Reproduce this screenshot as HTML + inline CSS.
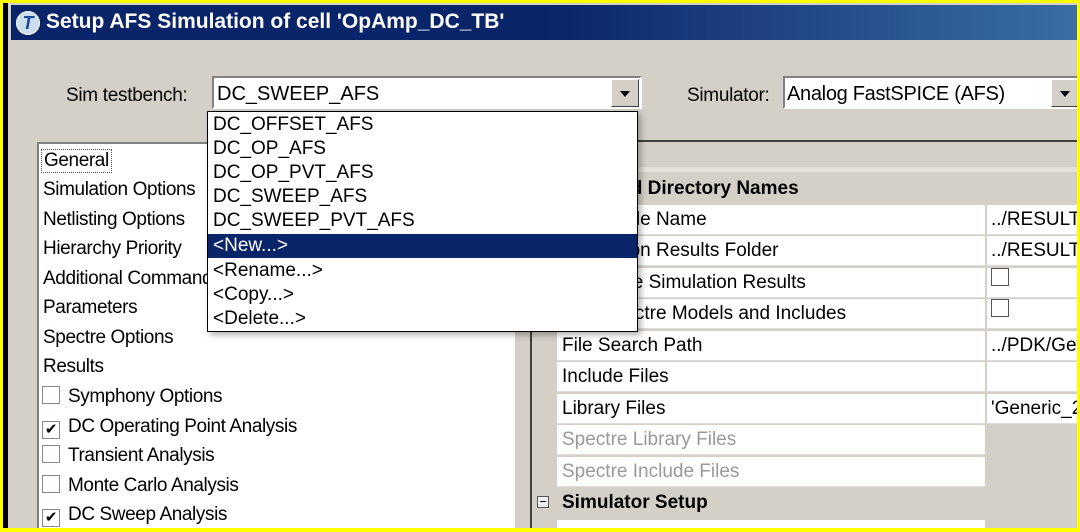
<html><head><style>
html,body{margin:0;width:1080px;height:532px;overflow:hidden}
body{background:#ff0;font-family:"Liberation Sans",sans-serif;position:relative}
.a{position:absolute}
#win{left:3px;top:3px;width:1074px;height:526px;background:#d4d0c8;border-left:5px solid #000;box-sizing:border-box;overflow:hidden}
#clip{position:absolute;left:0;top:0;width:1077px;height:529px;overflow:hidden}
.t{font-size:19px;color:#000;white-space:nowrap}
.li{position:absolute;left:4px;font-size:19px;letter-spacing:-0.4px}
.cb{display:inline-block;width:16px;height:16px;border:1px solid #888;background:#fff;vertical-align:-2px;margin-right:8px;position:relative;font-size:15px;line-height:16px;text-align:center}
.row{position:absolute;left:557px;width:428px;height:30px;background:#fff;font-size:19px;line-height:30px;padding-left:5px;box-sizing:border-box;border-bottom:1px solid #ddd}
.val{position:absolute;left:987px;width:90px;height:30px;background:#fff;font-size:19px;line-height:30px;padding-left:4px;box-sizing:border-box;overflow:hidden;white-space:nowrap;border-bottom:1px solid #ddd}
.dd{position:absolute;left:4px;font-size:19px;height:24px;line-height:24px;width:424px;padding-left:1px}
.btn{position:absolute;width:28px;height:28px;background:#d4d0c8;border:1px solid;border-color:#fff #404040 #404040 #fff;box-sizing:border-box}
.btn:after{content:"";position:absolute;left:8px;top:11px;border:5px solid transparent;border-top:6px solid #000}
</style></head><body>
<div id="clip">
<div id="win" class="a">
<div class="a" style="left:3px;top:2px;width:1066px;height:35px;background:linear-gradient(90deg,#0a246a,#0a246a 50%,#3a6ea5);"></div>
<div class="a" style="left:8px;top:8px;width:22px;height:22px;border-radius:50%;background:#cde;border:1px solid #fff;color:#1a4a9a;font-weight:bold;font-style:italic;font-size:18px;text-align:center;line-height:22px">T</div>
<div class="a t" style="left:38px;top:7px;color:#fff;font-weight:bold;font-size:21px">Setup AFS Simulation of cell 'OpAmp_DC_TB'</div>
<div class="a t" style="left:58px;top:82px;letter-spacing:-0.3px">Sim testbench:</div>
<div class="a" style="left:204px;top:73px;width:430px;height:33px;background:#fff;border:2px solid;border-color:#808080 #fff #fff #808080;box-sizing:border-box"></div>
<div class="a t" style="left:209px;top:80px;font-size:20px">DC_SWEEP_AFS</div>
<div class="btn" style="left:603px;top:76px"></div>
<div class="a t" style="left:679px;top:82px;letter-spacing:-0.3px">Simulator:</div>
<div class="a" style="left:775px;top:73px;width:300px;height:33px;background:#fff;border:2px solid;border-color:#808080 #fff #fff #808080;box-sizing:border-box"></div>
<div class="a t" style="left:779px;top:80px;font-size:20px;letter-spacing:-0.3px">Analog FastSPICE (AFS)</div>
<div class="btn" style="left:1043px;top:76px"></div>
<div class="a" style="left:29px;top:139px;width:478px;height:400px;background:#fff;border:2px solid;border-color:#808080 #fff #fff #808080;box-sizing:border-box">
<div class="li" style="top:5px;border:1px dotted #555;padding:0 2px;left:2px">General</div>
<div class="li" style="top:35px">Simulation Options</div>
<div class="li" style="top:65px">Netlisting Options</div>
<div class="li" style="top:94px">Hierarchy Priority</div>
<div class="li" style="top:124px">Additional Commands</div>
<div class="li" style="top:153px">Parameters</div>
<div class="li" style="top:183px">Spectre Options</div>
<div class="li" style="top:212px">Results</div>
<div class="li" style="top:242px;left:3px"><span class="cb"></span>Symphony Options</div>
<div class="li" style="top:272px;left:3px"><span class="cb">✔</span>DC Operating Point Analysis</div>
<div class="li" style="top:301px;left:3px"><span class="cb"></span>Transient Analysis</div>
<div class="li" style="top:331px;left:3px"><span class="cb"></span>Monte Carlo Analysis</div>
<div class="li" style="top:360px;left:3px"><span class="cb">✔</span>DC Sweep Analysis</div>
</div>
<div class="a" style="left:522px;top:137px;width:2px;height:400px;background:#404040"></div>
<div class="a" style="left:524px;top:137px;width:550px;height:2px;background:#404040"></div>
<div class="a" style="left:524px;top:164px;width:550px;height:5px;background:#e4e1da"></div>
</div>
<div class="a t" style="left:560px;top:146px;font-weight:bold">Setup</div>
<div class="a t" style="left:560px;top:178px;font-weight:bold">Files and Directory Names</div>
<div class="row" style="top:205px">Netlist File Name</div><div class="val" style="top:205px">../RESULTS</div>
<div class="row" style="top:236px">Simulation Results Folder</div><div class="val" style="top:236px">../RESULTS</div>
<div class="row" style="top:268px">Overwrite Simulation Results</div><div class="val" style="top:268px"><span class="cb" style="border-color:#555"></span></div>
<div class="row" style="top:299px">Use Spectre Models and Includes</div><div class="val" style="top:299px"><span class="cb" style="border-color:#555"></span></div>
<div class="row" style="top:331px">File Search Path</div><div class="val" style="top:331px">../PDK/Generic</div>
<div class="row" style="top:362px">Include Files</div><div class="val" style="top:362px"></div>
<div class="row" style="top:394px">Library Files</div><div class="val" style="top:394px">'Generic_2</div>
<div class="row" style="top:425px;color:#999">Spectre Library Files</div>
<div class="row" style="top:457px;color:#999">Spectre Include Files</div>
<div class="a" style="left:537px;top:496px;width:12px;height:12px;border:1px solid #555;background:#eee;box-sizing:border-box"><div class="a" style="left:2px;top:4px;width:6px;height:1px;background:#000"></div></div>
<div class="a t" style="left:562px;top:492px;font-weight:bold">Simulator Setup</div>
<div class="row" style="top:520px"></div>
<div class="a" style="left:207px;top:111px;width:431px;height:221px;background:#fff;border:1px solid #000;box-sizing:border-box;box-shadow:3px 3px 6px rgba(0,0,0,.3)">
<div class="dd" style="top:1px">DC_OFFSET_AFS</div>
<div class="dd" style="top:25px">DC_OP_AFS</div>
<div class="dd" style="top:49px">DC_OP_PVT_AFS</div>
<div class="dd" style="top:73px">DC_SWEEP_AFS</div>
<div class="dd" style="top:97px">DC_SWEEP_PVT_AFS</div>
<div class="dd" style="top:122px;background:#0a246a;color:#fff;left:0;padding-left:5px">&lt;New...&gt;</div>
<div class="dd" style="top:147px">&lt;Rename...&gt;</div>
<div class="dd" style="top:171px">&lt;Copy...&gt;</div>
<div class="dd" style="top:195px">&lt;Delete...&gt;</div>
</div>
</div>
<div class="a" style="left:0;top:528px;width:1080px;height:4px;background:#ff0"></div>
</body></html>
